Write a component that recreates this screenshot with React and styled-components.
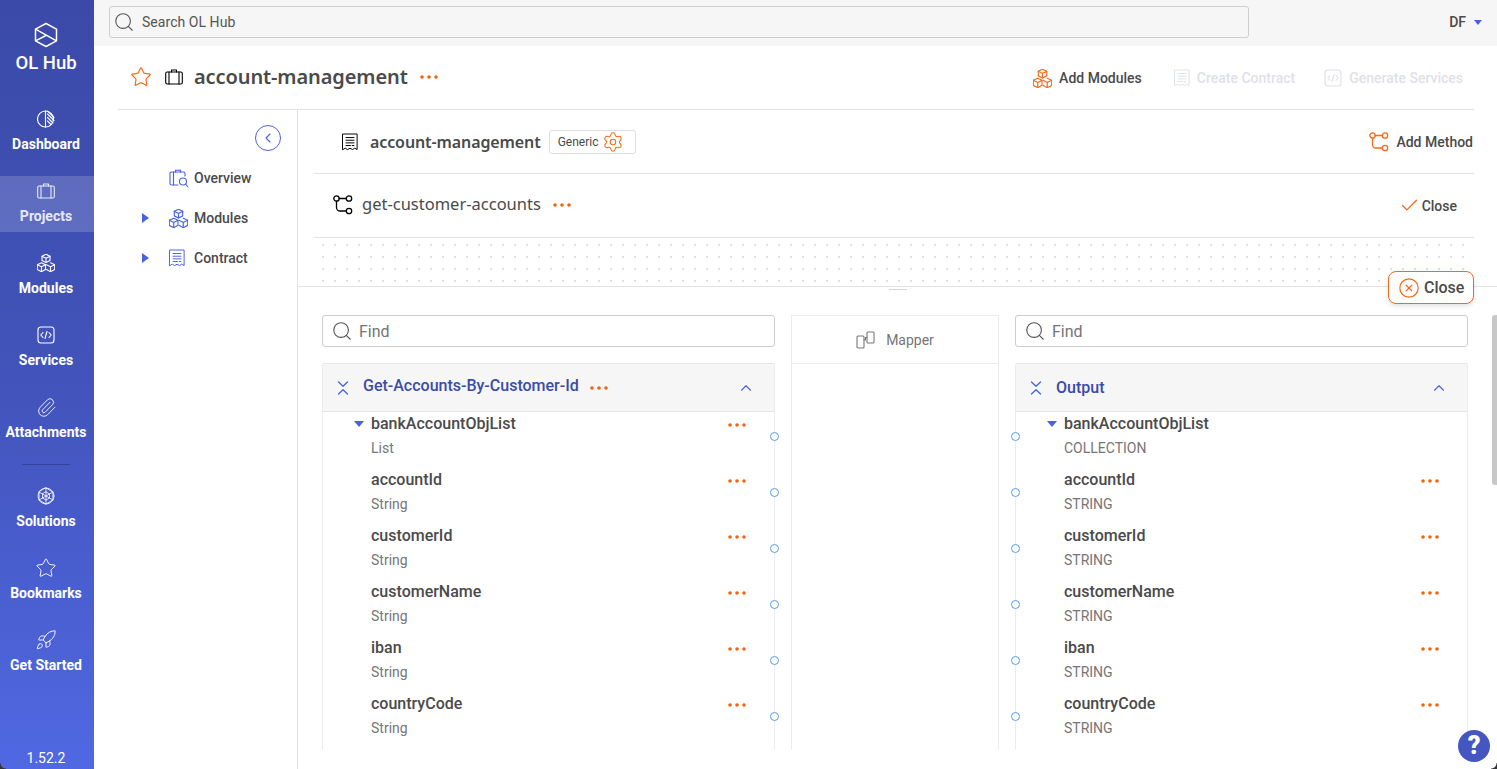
import React from 'react'
import styled, { createGlobalStyle } from 'styled-components'
import { Search, Star, Settings, Check, ChevronUp, ChevronLeft, Paperclip, Rocket, CircleX } from 'lucide-react'

const GlobalStyle = createGlobalStyle`
  html, body {
    margin: 0;
    height: 100%;
    overflow: hidden;
    background: #fff;
    font-family: Roboto, "Liberation Sans", sans-serif;
  }
  * { box-sizing: border-box; }
`;

const ORANGE = '#f26a1b';
const BLUE = '#4a62e0';
const INK = '#4a4a4a';
const LINE = '#e2e2e2';

const Shell = styled.div`
  display: flex;
  width: 1497px;
  height: 769px;
  overflow: hidden;
  position: relative;

  /* rounded window corners of the capture */
  &::before, &::after {
    content: '';
    position: absolute;
    bottom: 0;
    width: 6px;
    height: 6px;
  }
  &::before {
    left: 0;
    background: radial-gradient(circle at 100% 0, transparent 5px, #333 6px);
  }
  &::after {
    right: 0;
    background: radial-gradient(circle at 0 0, transparent 5px, #333 6px);
  }
`;

/* sidebar */
const Sidebar = styled.nav`
  width: 94px;
  flex: none;
  display: flex;
  flex-direction: column;
  align-items: stretch;
  color: #fff;
  background: linear-gradient(180deg, #3b4aa8 0%, #4254bb 50%, #5068e2 100%);
`;
const Brand = styled.div`
  height: 104px;
  padding: 22px 2px 0 0;
  display: flex;
  flex-direction: column;
  align-items: center;
  font-size: 18.5px;
  font-weight: 500;
  line-height: 22px;
  gap: 4px;
`;
const SideLink = styled.a`
  height: 56px;
  margin-top: ${p => (p.$first ? '0' : '16px')};
  display: flex;
  flex-direction: column;
  align-items: center;
  padding: 5px 2px 0 0;
  font-size: 14px;
  font-weight: 700;
  line-height: 20px;
  gap: 5px;
  background: ${p => (p.$active ? 'rgba(255,255,255,.17)' : 'transparent')};
  color: ${p => (p.$active ? '#e6e9fb' : '#fff')};
`;
const SideIcon = styled.span`
  height: 20px;
  display: flex;
  align-items: center;
  justify-content: center;
`;
const SideRule = styled.hr`
  width: 48px;
  height: 1px;
  border: 0;
  margin: 16px 0 16px 22px;
  background: #34429a;
`;
const Version = styled.div`
  margin-top: auto;
  padding: 0 2px 1px 0;
  text-align: center;
  font-size: 14px;
  line-height: 20px;
`;

/* main area */
const Main = styled.div`
  flex: 1;
  min-width: 0;
  display: flex;
  flex-direction: column;
`;
const TopBar = styled.header`
  height: 46px;
  flex: none;
  background: #f6f6f6;
  display: flex;
  align-items: flex-start;
  padding: 6px 15px 0 15px;
`;
const SearchBox = styled.div`
  width: 1140px;
  height: 32px;
  display: flex;
  align-items: center;
  gap: 7px;
  padding-left: 3px;
  border: 1px solid #cfcfcf;
  border-radius: 3px;
  font-size: 14px;
  letter-spacing: .05px;
  color: #555;
`;
const UserMenu = styled.div`
  margin-left: auto;
  height: 32px;
  display: flex;
  align-items: center;
  gap: 8px;
  font-size: 14px;
  font-weight: 500;
  color: ${INK};
`;
const Caret = styled.span`
  width: 0;
  height: 0;
  display: inline-block;
  border-left: ${p => p.$half || 4}px solid transparent;
  border-right: ${p => p.$half || 4}px solid transparent;
  border-top: ${p => (p.$half ? p.$half + 1 : 5)}px solid ${BLUE};
`;
const SideCaret = styled.span`
  width: 0;
  height: 0;
  display: inline-block;
  border-top: 5px solid transparent;
  border-bottom: 5px solid transparent;
  border-left: 7px solid ${BLUE};
`;

const TitleRow = styled.div`
  height: 64px;
  flex: none;
  margin: 0 23px 0 24px;
  padding: 0 11px 1px 12px;
  display: flex;
  align-items: center;
  border-bottom: 1px solid ${LINE};
`;
const TitleStar = styled.span`
  display: flex;
  margin-right: 13px;
  color: ${ORANGE};
`;
const Title = styled.h1`
  margin: 0 12px 0 11px;
  font-family: "Noto Sans", sans-serif;
  font-size: 20px;
  font-weight: 600;
  line-height: 28px;
  letter-spacing: -.1px;
  color: ${INK};
`;
const Actions = styled.div`
  margin-left: auto;
  padding-top: 2px;
  display: flex;
  align-items: center;
  gap: 29px;
`;
const Action = styled.span`
  display: inline-flex;
  align-items: center;
  gap: ${p => (p.$gap === undefined ? 7 : p.$gap)}px;
  margin-left: ${p => (p.$push ? 'auto' : '0')};
  margin-right: ${p => p.$after || 0}px;
  font-size: 14px;
  font-weight: 500;
  color: ${p => (p.$disabled ? '#dfe1e8' : INK)};
`;

const Body = styled.div`
  flex: 1;
  min-height: 0;
  display: flex;
  padding-left: 24px;
`;
const Tree = styled.aside`
  width: 180px;
  flex: none;
  border-right: 1px solid ${LINE};
`;
const Collapse = styled.button`
  display: flex;
  align-items: center;
  justify-content: center;
  width: 26px;
  height: 26px;
  margin: 15px 16px 7px auto;
  padding: 0;
  background: #fff;
  border: 1px solid ${BLUE};
  border-radius: 50%;
  color: ${BLUE};
`;
const TreeItem = styled.div`
  height: 40px;
  display: grid;
  grid-template-columns: 24px 27px 25px auto;
  align-items: center;
  font-size: 14px;
  font-weight: 500;
  color: ${INK};
  & > :first-child { grid-column: 2; }
`;
const TreeIcon = styled.span`
  display: flex;
  color: ${BLUE};
`;

const Content = styled.section`
  flex: 1;
  min-width: 0;
  display: flex;
  flex-direction: column;
  position: relative;
`;
const Upper = styled.div`
  flex: none;
  margin: 0 23px 0 16px;
`;
const UpperRow = styled.div`
  height: 64px;
  display: flex;
  align-items: center;
  border-bottom: 1px solid ${LINE};
  padding: ${p => p.$pad};
`;
const ContractName = styled.h2`
  margin: 0 8px 0 12px;
  font-family: "Noto Sans", sans-serif;
  font-size: 16px;
  font-weight: 600;
  line-height: 24px;
  letter-spacing: -.1px;
  color: ${INK};
`;
const Tag = styled.span`
  display: inline-flex;
  align-items: center;
  gap: 4px;
  width: 87px;
  height: 24px;
  padding-left: 8px;
  border: 1px solid #dedede;
  border-radius: 3px;
  font-size: 12px;
  color: ${INK};
`;
const MethodHead = styled.div`
  display: flex;
  align-items: center;
  padding-bottom: 2px;
`;
const MethodName = styled.span`
  margin: 0 12px 1px 9px;
  font-family: "Noto Sans", sans-serif;
  font-size: 16.5px;
  line-height: 24px;
  color: ${INK};
`;
const Dotted = styled.div`
  height: 48px;
  background-image: radial-gradient(circle, #e0e0e0 .8px, transparent 1px);
  background-size: 12px 12px;
  background-position: 3px 1px;
`;
const Lower = styled.div`
  flex: 1;
  min-height: 0;
  position: relative;
  border-top: 1px solid ${LINE};
  display: grid;
  grid-template-columns: 453px 208px 453px;
  column-gap: 16px;
  align-content: start;
  padding: 28px 0 0 24px;
`;
const Grip = styled.span`
  position: absolute;
  top: 2px;
  left: 591px;
  width: 18px;
  height: 1px;
  background: #d5d5d5;
`;
const CloseFloat = styled.button`
  position: absolute;
  top: -16px;
  right: 23px;
  width: 86px;
  height: 33px;
  display: flex;
  align-items: center;
  gap: 4px;
  padding: 0 0 0 9px;
  background: #fff;
  border: 1.5px solid ${ORANGE};
  border-radius: 8px;
  box-shadow: 0 2px 5px rgba(0,0,0,.12);
  font: 500 16px Roboto, sans-serif;
  color: ${INK};
`;
const Scrollbar = styled.span`
  position: absolute;
  top: 28px;
  right: 0;
  width: 5px;
  height: 170px;
  border-radius: 3px 0 0 3px;
  background: #c8c8c8;
`;

const Column = styled.div`
  display: flex;
  flex-direction: column;
`;
const FindBox = styled.div`
  height: 32px;
  display: flex;
  align-items: center;
  gap: 6px;
  padding-left: 8px;
  margin-bottom: 16px;
  border: 1px solid #cdcdcd;
  border-radius: 3px;
  font-size: 16px;
  color: #757575;
`;
const FieldTree = styled.div`
  border: 1px solid #ececec;
  border-top-color: #e6e6e6;
  border-bottom: 0;
  border-radius: 2px 2px 0 0;
  padding-bottom: 2px;
`;
const TreeHead = styled.div`
  height: 48px;
  display: flex;
  align-items: center;
  padding: 0 19px 0 14px;
  background: #f6f6f6;
  border-bottom: 1px solid #e6e6e6;
  font-size: 16px;
  font-weight: 500;
  color: #3a4bab;
`;
const HeadLabel = styled.span`
  margin: 0 11px ${p => (p.$lift ? '4px' : '0')} 14px;
`;
const HeadEnd = styled.span`
  margin-left: auto;
  display: flex;
  color: ${BLUE};
`;
const Row = styled.div`
  height: 56px;
  position: relative;
  display: grid;
  grid-template-columns: 48px 1fr auto;
  padding-right: 28px;
`;
const RowCaret = styled.span`
  display: flex;
  justify-content: flex-end;
  align-items: flex-start;
  padding: 9px 7px 0 0;
`;
const RowName = styled.div`
  padding-top: 1px;
  font-size: 16px;
  font-weight: 500;
  line-height: 22px;
  color: ${INK};
`;
const RowType = styled.div`
  margin-top: 3px;
  font-size: 14px;
  line-height: 20px;
  color: #757575;
`;
const Port = styled.span`
  position: absolute;
  top: 20px;
  ${p => (p.$side === 'left' ? 'left: -5px;' : 'right: -5px;')}
  width: 9px;
  height: 9px;
  border-radius: 50%;
  background: #fff;
  border: 1px solid #5a9bf0;
`;
const RowDots = styled.span`
  display: flex;
  align-self: start;
  padding-top: 11px;
`;
const Mapper = styled.div`
  height: 435px;
  border: 1px solid #ececec;
  border-bottom: 0;
`;
const MapperHead = styled.div`
  height: 48px;
  display: flex;
  align-items: center;
  justify-content: center;
  gap: 10px;
  border-bottom: 1px solid #ececec;
  font-size: 14px;
  color: #757575;
`;
const Help = styled.button`
  position: absolute;
  left: 1458px;
  top: 730px;
  width: 32px;
  height: 32px;
  padding: 0;
  border: 0;
  border-radius: 50%;
  background: #4356c2;
  color: #fff;
  font: 900 25px/32px Roboto, sans-serif;
  text-align: center;
`;

const Dots = () => (
  <svg width="18" height="4" viewBox="0 0 18 4" fill="#f0640f">
    <circle cx="2" cy="2" r="1.800" /><circle cx="9" cy="2" r="1.800" /><circle cx="16" cy="2" r="1.800" />
  </svg>
)

const line = { fill: 'none', stroke: 'currentColor', strokeWidth: 1.100, strokeLinecap: 'round', strokeLinejoin: 'round' }

const Logo = () => (
  <svg width="24" height="26" viewBox="0 0 24 26" fill="none" stroke="#fff" strokeWidth="1.500" strokeLinejoin="round">
    <path d="M12 1.500 22.500 7.200v11.600L12 24.500 1.500 18.800V7.200Z" />
    <path d="M1.500 7.200 22.500 18.800M1.500 18.800 12 13.500" />
  </svg>
)
const Pie = () => (
  <svg width="18" height="18" viewBox="0 0 18 18" {...line}>
    <circle cx="8.500" cy="9" r="8" />
    <path d="M8.500 1v16" />
    <path d="M10.500 1.200 17 7.500M10.500 4l6.500 6.500M10.500 7.500l5.500 5.500M10.500 11l3.500 3.500" />
  </svg>
)
const Briefcase = () => (
  <svg width="18" height="16" viewBox="0 0 18 16" {...line}>
    <rect x=".7" y="3" width="16.600" height="12" rx="1.500" />
    <path d="M4 3v12M14 3v12M6.500 3V1h5v2" />
  </svg>
)
const Cubes = ({ size = 18, color = 'currentColor' }) => (
  <svg width={size} height={size} viewBox="1 1 18 18" {...line} stroke={color}>
    <path d="M10 1.200 14 3.200v4.300l-4 2-4-2V3.200Z" />
    <path d="M6 3.200 10 5.200l4-2M10 5.200v4.300" />
    <path d="M5.500 9.700 9.500 11.700V16.500l-4 2.200-4.200-2.200v-4.800Z" />
    <path d="M1.300 11.700 5.500 13.700l4-2M5.500 13.700v5" />
    <path d="M14.500 9.700 18.700 11.700V16.500l-4.200 2.200-4-2.200" />
    <path d="M10.500 11.700 14.500 13.700l4.200-2M14.500 13.700v5" />
  </svg>
)
const Receipt = ({ size = 18 }) => (
  <svg width={size} height={size + 2} viewBox="0 0 18 20" {...line}>
    <path d="M1 1h16v17.500l-2.700-1.500-2.600 1.500L9 17l-2.700 1.500L3.700 17 1 18.500Z" />
    <path d="M4.500 5h9M4.500 8h9M4.500 11h9M4.500 14h5M11.500 14h2" />
  </svg>
)
const CodeBox = () => (
  <svg width="18" height="18" viewBox="0 0 18 18" {...line}>
    <rect x="1" y="1" width="16" height="16" rx="3" />
    <path d="M6 6.500 3.800 9 6 11.500M12 6.500 14.200 9 12 11.500M10 5.500 8 12.500" />
  </svg>
)
const Branch = ({ color = 'currentColor' }) => (
  <svg width="20" height="20" viewBox="0 0 20 20" {...line} stroke={color} strokeWidth="1.300">
    <circle cx="3.500" cy="3.500" r="2.700" />
    <circle cx="16" cy="3.500" r="2.700" />
    <circle cx="16" cy="16" r="2.700" />
    <path d="M6.200 3.500h7M3.500 6.200v6.300a3.500 3.500 0 0 0 3.500 3.500h6.300" />
  </svg>
)
const Geo = () => (
  <svg width="18" height="18" viewBox="0 0 18 18" {...line} strokeWidth=".8">
    <circle cx="9" cy="9" r="8" />
    <path d="M9 1 15.900 5v8L9 17l-6.900-4V5Z" />
    <path d="M9 1v4M15.900 5 12.500 7M15.900 13 12.500 11M9 17v-4M2.100 13 5.500 11M2.100 5 5.500 7" />
    <path d="M9 5l3.500 2v4L9 13l-3.500-2V7ZM5.500 7 9 9l3.500-2M9 9v4M5.500 11 9 9l3.500 2M9 5v4" />
  </svg>
)
const Overview = () => (
  <svg width="20" height="19" viewBox="0 0 20 19" fill="none" stroke={BLUE} strokeWidth="1.100" strokeLinecap="round">
    <path d="M9 16H2.500A1.500 1.500 0 0 1 1 14.500V4.500A1.500 1.500 0 0 1 2.500 3h12A1.500 1.500 0 0 1 16 4.500V7" />
    <path d="M4.500 3v13M6.500 3V1.200h5V3" />
    <circle cx="14" cy="12.500" r="3.500" />
    <path d="M16.500 15 19 18" />
  </svg>
)
const MapperIcon = () => (
  <svg width="20" height="18" viewBox="0 0 20 18" {...line} stroke="#777">
    <rect x="1" y="5" width="7" height="12" rx="1" />
    <rect x="11" y="1" width="7" height="11" rx="1" />
    <path d="M8 9h1.500V6.500H11" />
  </svg>
)
const Expand = () => (
  <svg width="12" height="14" viewBox="0 0 12 14" fill="none" stroke={BLUE} strokeWidth="1.300" strokeLinecap="round" strokeLinejoin="round">
    <path d="M1.500 1 6 5.300 10.500 1M1.500 13 6 8.700 10.500 13" />
  </svg>
)

const sideItems = [
  { label: 'Dashboard', icon: <Pie /> },
  { label: 'Projects', icon: <Briefcase />, active: true },
  { label: 'Modules', icon: <Cubes /> },
  { label: 'Services', icon: <CodeBox /> },
  { label: 'Attachments', icon: <Paperclip size={21} strokeWidth={1} /> },
]
const sideExtras = [
  { label: 'Solutions', icon: <Geo /> },
  { label: 'Bookmarks', icon: <Star size={22} strokeWidth={1} /> },
  { label: 'Get Started', icon: <Rocket size={22} strokeWidth={1} /> },
]
const fields = ['bankAccountObjList', 'accountId', 'customerId', 'customerName', 'iban', 'countryCode']

const FieldList = ({ side, upper, listType }) => fields.map((name, i) => (
  <Row key={name}>
    <RowCaret>{i === 0 && <Caret $half={5} />}</RowCaret>
    <div>
      <RowName>{name}</RowName>
      <RowType>{i === 0 ? listType : upper ? 'STRING' : 'String'}</RowType>
    </div>
    <RowDots>{(side === 'right' || i > 0) && <Dots />}</RowDots>
    <Port $side={side} />
  </Row>
))

const App = () => {
  return (
    <Shell>
      <GlobalStyle />
      <Sidebar>
        <Brand><Logo />OL Hub</Brand>
        {sideItems.map((it, i) => (
          <SideLink key={it.label} $first={i === 0} $active={it.active}>
            <SideIcon>{it.icon}</SideIcon>{it.label}
          </SideLink>
        ))}
        <SideRule />
        {sideExtras.map((it, i) => (
          <SideLink key={it.label} $first={i === 0}>
            <SideIcon>{it.icon}</SideIcon>{it.label}
          </SideLink>
        ))}
        <Version>1.52.2</Version>
      </Sidebar>

      <Main>
        <TopBar>
          <SearchBox><Search size={22} strokeWidth={1.200} />Search OL Hub</SearchBox>
          <UserMenu>DF <Caret /></UserMenu>
        </TopBar>

        <TitleRow>
          <TitleStar><Star size={22} strokeWidth={1.300} /></TitleStar>
          <Briefcase />
          <Title>account-management</Title>
          <Dots />
          <Actions>
            <Action $after={3}><Cubes size={19} color={ORANGE} />Add Modules</Action>
            <Action $disabled><Receipt size={16} />Create Contract</Action>
            <Action $disabled><CodeBox />Generate Services</Action>
          </Actions>
        </TitleRow>

        <Body>
          <Tree>
            <Collapse><ChevronLeft size={16} strokeWidth={1.700} /></Collapse>
            <TreeItem><span /><TreeIcon><Overview /></TreeIcon><span>Overview</span></TreeItem>
            <TreeItem><SideCaret /><TreeIcon><Cubes size={19} /></TreeIcon><span>Modules</span></TreeItem>
            <TreeItem><SideCaret /><TreeIcon><Receipt size={16} /></TreeIcon><span>Contract</span></TreeItem>
          </Tree>

          <Content>
            <Upper>
              <UpperRow $pad="0 1px 0 28px">
                <Receipt size={16} />
                <ContractName>account-management</ContractName>
                <Tag>Generic <Settings size={22} strokeWidth={1.100} color={ORANGE} /></Tag>
                <Action $push><Branch color={ORANGE} />Add Method</Action>
              </UpperRow>
              <UpperRow $pad="0 17px 0 19px">
                <MethodHead>
                  <Branch />
                  <MethodName>get-customer-accounts</MethodName>
                  <Dots />
                </MethodHead>
                <Action $push $gap={2}><Check size={21} strokeWidth={1.600} color={ORANGE} />Close</Action>
              </UpperRow>
              <Dotted />
            </Upper>

            <Lower>
              <Grip />
              <CloseFloat><CircleX size={22} strokeWidth={1.300} color={ORANGE} />Close</CloseFloat>
              <Scrollbar />

              <Column>
                <FindBox><Search size={22} strokeWidth={1.200} color="#555" />Find</FindBox>
                <FieldTree>
                  <TreeHead>
                    <Expand />
                    <HeadLabel $lift>Get-Accounts-By-Customer-Id</HeadLabel>
                    <Dots />
                    <HeadEnd><ChevronUp size={18} strokeWidth={1.500} /></HeadEnd>
                  </TreeHead>
                  <FieldList side="right" listType="List" />
                </FieldTree>
              </Column>

              <Mapper>
                <MapperHead><MapperIcon />Mapper</MapperHead>
              </Mapper>

              <Column>
                <FindBox><Search size={22} strokeWidth={1.200} color="#555" />Find</FindBox>
                <FieldTree>
                  <TreeHead>
                    <Expand />
                    <HeadLabel>Output</HeadLabel>
                    <HeadEnd><ChevronUp size={18} strokeWidth={1.500} /></HeadEnd>
                  </TreeHead>
                  <FieldList side="left" upper listType="COLLECTION" />
                </FieldTree>
              </Column>
            </Lower>
          </Content>
        </Body>
      </Main>
      <Help>?</Help>
    </Shell>
  )
}

export default App
